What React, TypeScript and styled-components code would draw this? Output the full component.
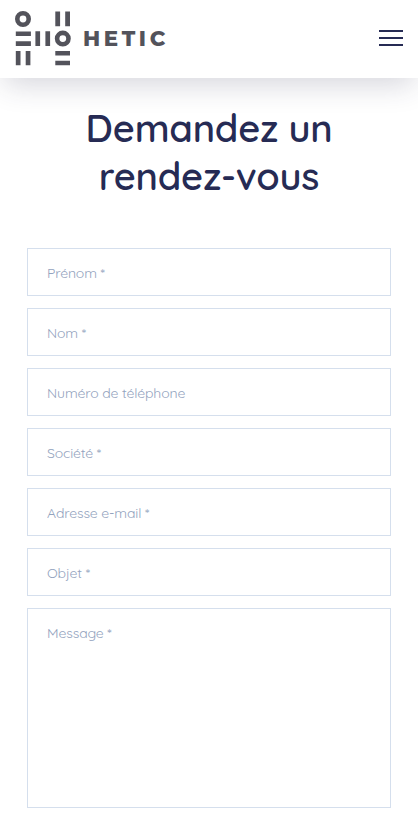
import React from "react";
import styled, { createGlobalStyle } from "styled-components";

const GlobalStyle = createGlobalStyle`
  * { box-sizing: border-box; }
  html { overflow: hidden; }
  body { margin: 0; background: #fff; font-family: Quicksand, Lato, sans-serif; }
`;

const Header = styled.header`
  position: relative;
  display: flex;
  align-items: center;
  justify-content: space-between;
  height: 78px;
  padding: 0 15px;
  background: #fff;
  box-shadow: 0 10px 30px -4px rgba(41, 38, 75, 0.2);
`;

const Logo = styled.svg`
  display: block;
  width: 164px;
  height: 78px;
`;

const MenuButton = styled.button`
  display: flex;
  flex-direction: column;
  gap: 5px;
  width: 24px;
  margin-bottom: 2px;
  padding: 0;
  border: 0;
  background: none;
`;

const MenuLine = styled.span`
  height: 2px;
  background: #262b54;
`;

const Main = styled.main`
  padding: 26px 27px 9px;
`;

const Title = styled.h1`
  margin: 0 0 48px;
  color: #262b54;
  font-size: 38px;
  font-weight: 600;
  letter-spacing: -0.25px;
  line-height: 48px;
  text-align: center;
`;

const Form = styled.form`
  display: flex;
  flex-direction: column;
  gap: 12px;
`;

const Input = styled.input`
  width: 100%;
  height: 48px;
  padding: 2px 19px 0;
  border: 1px solid #d5dfed;
  border-radius: 0;
  outline: none;
  background: #fff;
  color: #262b54;
  font: 400 14px/20px Quicksand, Lato, sans-serif;
  letter-spacing: -0.14px;
  &::placeholder {
    color: #93a3be;
    opacity: 1;
  }
`;

const TextArea = styled(Input)`
  display: block;
  height: 200px;
  padding-top: 14px;
  resize: none;
`;

const fields = [
  "Prénom *",
  "Nom *",
  "Numéro de téléphone",
  "Société *",
  "Adresse e-mail *",
  "Objet *",
];

const HeticLogo = () => (
  <Logo viewBox="15 0 164 78" fill="#53535b" aria-label="HETIC">
    <g fill="none" stroke="#53535b" strokeWidth="4.6">
      <circle cx="23" cy="19" r="5.7" />
      <circle cx="62.8" cy="38.6" r="5.7" />
    </g>
    <path d="M55.3 11.5h4.8v14.8h-4.8zM65.2 11.5H70v14.8h-4.8zM15.8 31.5h15.1v4.6H15.8zM15.8 41.2h15.1v4.7H15.8zM35.4 31.2h4.7v14.9h-4.7zM45.4 31.2h4.7v14.9h-4.7zM15.8 51h4.7v14.2h-4.7zM25.7 51h4.7v14.2h-4.7zM55.3 51H70v4.5H55.3zM55.3 60.7H70v4.5H55.3z" />
    <text x="82.9" y="46" fontFamily="Montserrat, Inter, sans-serif" fontSize="21" fontWeight="800" letterSpacing="3.6" textLength="86" lengthAdjust="spacingAndGlyphs">HETIC</text>
  </Logo>
);

export default function App() {
  return (
    <>
      <GlobalStyle />
      <Header>
        <HeticLogo />
        <MenuButton aria-label="Menu">
          <MenuLine />
          <MenuLine />
          <MenuLine />
        </MenuButton>
      </Header>
      <Main>
        <Title>Demandez un rendez-vous</Title>
        <Form>
          {fields.map((label) => (
            <Input key={label} placeholder={label} />
          ))}
          <TextArea as="textarea" placeholder="Message *" />
        </Form>
      </Main>
    </>
  );
}
